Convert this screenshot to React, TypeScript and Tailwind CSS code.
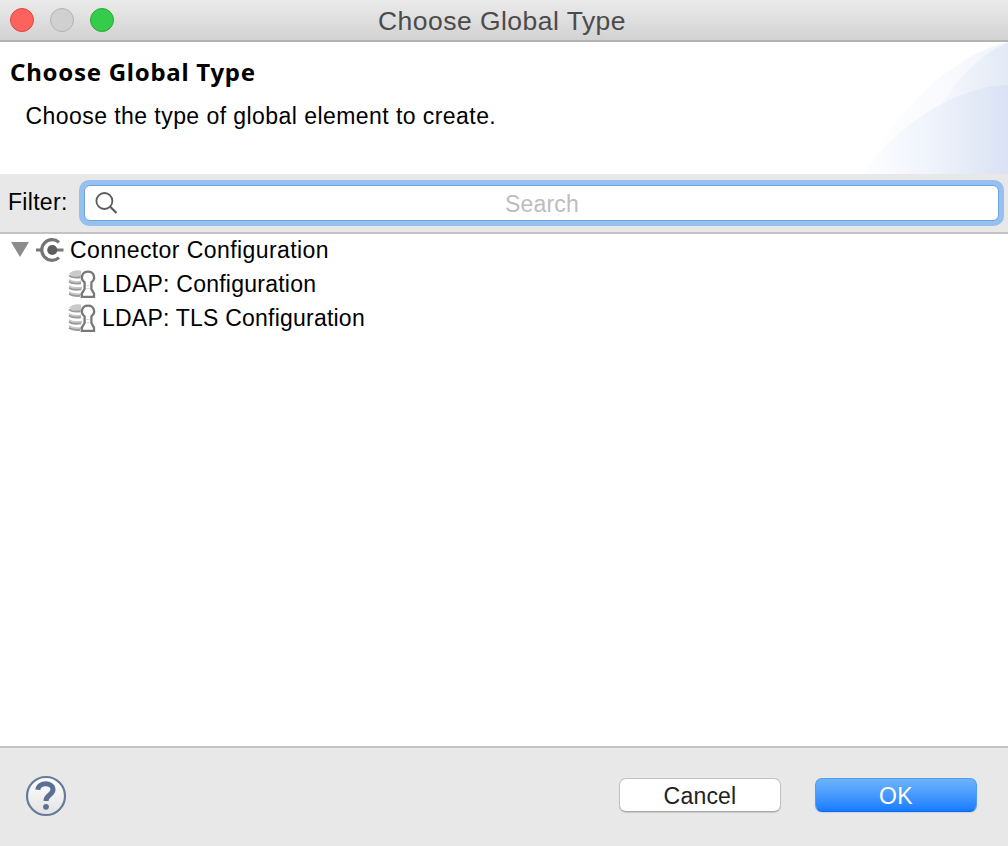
function ConnectorIcon() {
  return (
    <svg className="ml-[6px] h-8 w-[30px] shrink-0" viewBox="0 0 30 32" fill="none">
      <path d="M1 16H6.5M17 16H28.5" stroke="#777" strokeWidth="3" />
      <path d="M24 8.4A10.3 10.3 0 1 0 24 23.6" stroke="#757575" strokeWidth="3.2" />
      <circle cx="17.3" cy="16" r="5.1" fill="#5e5e5e" />
    </svg>
  );
}

function ConfigIcon() {
  return (
    <svg className="h-8 w-8 shrink-0" viewBox="0 0 32 32" fill="none">
      <path
        d="M3 6.5Q8 2 15 3.5V10Q7 11 3 6.5ZM3 12Q8 15 15 13.5V16.5Q7 17.5 3 14.5ZM3 18.2Q8 21 16 19.7V22.4Q7 23.6 3 21ZM3 24.2Q8 27 15 26V28.6Q7 29.8 3 27.2Z"
        fill="#cacaca"
      />
      <path d="M3 8.5Q7 11.5 14.5 10.2M3 14.7Q7 17.5 15 16.3M3 21Q7 23.7 15 22.4M3 27Q7 29.5 14 28.8" stroke="#999" strokeWidth="1.9" />
      <path
        d="M18.6 15.4C13.8 11.8 15.8 4.6 22 4.6S30.2 11.8 25.4 15.4V22L28 26.6V29.8H15.8V26.6L18.6 22Z"
        fill="#fff"
        stroke="#787878"
        strokeWidth="2.3"
      />
      <path d="M20 18.5H24M20 21.5H24" stroke="#e1e1e1" strokeWidth="1" />
    </svg>
  );
}

function TreeItem({ label, spacing }: { label: string; spacing: string }) {
  return (
    <div className="flex h-[34px] items-center pl-[66px]">
      <ConfigIcon />
      <span className={`ml-[4px] pt-[2px] ${spacing}`}>{label}</span>
    </div>
  );
}

function HeaderArt() {
  return (
    <svg className="h-[132px] w-[148px]" viewBox="0 0 148 132">
      <defs>
        <linearGradient id="outer" gradientUnits="userSpaceOnUse" x1="0" x2="148">
          <stop offset="0" stopColor="#fff" />
          <stop offset=".5" stopColor="#fafbfe" />
          <stop offset="1" stopColor="#f0f4fb" />
        </linearGradient>
        <linearGradient id="inner" gradientUnits="userSpaceOnUse" x1="60" x2="148">
          <stop offset="0" stopColor="#f9fafe" />
          <stop offset=".4" stopColor="#f1f5fb" />
          <stop offset="1" stopColor="#e3eaf6" />
        </linearGradient>
        <linearGradient id="lower" gradientUnits="userSpaceOnUse" x1="0" x2="148">
          <stop offset="0" stopColor="#fefefe" />
          <stop offset=".45" stopColor="#f0f4fc" />
          <stop offset=".87" stopColor="#dfe7f5" />
          <stop offset=".9" stopColor="#dde4f6" />
          <stop offset="1" stopColor="#dce2f6" />
        </linearGradient>
      </defs>
      <path d="M3 132C32 75 86 15 148 0V132Z" fill="url(#outer)" />
      <path d="M52 132C60 85 104 16 148 1V132Z" fill="url(#inner)" />
      <path d="M3 132C36 83 96 44 148 43V132Z" fill="url(#lower)" />
    </svg>
  );
}

export default function App() {
  return (
    <main className="flex h-[846px] w-[1008px] flex-col overflow-hidden bg-[#e8e8e8] font-['Liberation_Sans',Arial,sans-serif] text-[23px] leading-8 tracking-[0.44px] text-black">
      <header className="grid h-[42px] shrink-0 grid-cols-[1fr_auto_1fr] items-center border-b-2 border-[#b3b3b3] bg-linear-to-b from-[#ebebeb] to-[#d2d2d2]">
        <div className="flex gap-4 pl-[10px]">
          <span className="size-6 rounded-full border border-[#e2443f] bg-[#fd625d]" />
          <span className="size-6 rounded-full border border-[#b2b2b2] bg-[#d0d0d0]" />
          <span className="size-6 rounded-full border border-[#24ac36] bg-[#35cb4b]" />
        </div>
        <h1 className="pt-px pr-[4px] text-[26.5px] tracking-[0.47px] text-[#4b4b4b]">Choose Global Type</h1>
      </header>

      <section className="flex h-[132px] shrink-0 justify-between bg-white">
        <div className="pt-[14px] pl-[10px]">
          <h2 className="font-['Noto_Sans','Open_Sans',sans-serif] text-[24px] font-bold tracking-[0.73px]">Choose Global Type</h2>
          <p className="mt-[12px] pl-[15.5px]">Choose the type of global element to create.</p>
        </div>
        <HeaderArt />
      </section>

      <section className="flex h-[60px] shrink-0 border-b-2 border-[#c3c3c3] pl-[8px]">
        <label htmlFor="filter" className="w-[71px] pt-[12px] tracking-[0.3px]">Filter:</label>
        <div className="mt-[6px] h-[46px] w-[925px] rounded-[10px] bg-[#95c0f0] p-[5px]">
          <div className="flex h-full items-center rounded-[6px] border border-[#6fa3dc] bg-white">
            <svg className="ml-[10px] h-6 w-6 shrink-0" viewBox="0 0 24 24" fill="none" stroke="#5c5c5c" strokeWidth="1.8">
              <circle cx="9.4" cy="10" r="8" />
              <path d="M15.2 15.8L21.5 22" strokeWidth="2.2" />
            </svg>
            <input id="filter" placeholder="Search" className="mr-[33px] min-w-0 flex-1 bg-transparent pt-px text-center tracking-[0.2px] outline-none placeholder:text-[#bdbdbd]" />
          </div>
        </div>
      </section>

      <section className="min-h-0 flex-1 bg-white">
        <div className="flex h-[32px] items-center pl-[11px]">
          <svg className="h-4 w-[18px] shrink-0" viewBox="0 0 18 16"><path d="M0 0H18L9 15Z" fill="#8c8c8c" /></svg>
          <ConnectorIcon />
          <span className="ml-[5px] tracking-[0.42px]">Connector Configuration</span>
        </div>
        <TreeItem label="LDAP: Configuration" spacing="tracking-[0.24px]" />
        <TreeItem label="LDAP: TLS Configuration" spacing="tracking-[0.22px]" />
      </section>

      <footer className="flex h-[100px] shrink-0 items-center border-t-2 border-[#c3c3c3] pr-[31px] pb-[4px] pl-[25px]">
        <button aria-label="Help" className="pt-px">
          <svg className="size-[42px]" viewBox="0 0 42 42" fill="none">
            <defs>
              <linearGradient id="help" x2="0" y2="1"><stop stopColor="#fff" /><stop offset="1" stopColor="#e2e2e2" /></linearGradient>
            </defs>
            <circle cx="21" cy="21" r="19" fill="url(#help)" stroke="#667a9b" strokeWidth="2.2" />
            <path d="M12.8 14.8C13.6 6.8 28 6.8 28 14.5C28 20 21 19.5 21 26" stroke="#5a7094" strokeWidth="5" />
            <circle cx="21" cy="31.8" r="2.9" fill="#5a7094" />
          </svg>
        </button>
        <div className="ml-auto flex gap-[34px]">
          <button className="h-[34px] w-[162px] rounded-[7px] border border-[#c2c2c2] border-b-[#aaa] bg-white pt-px tracking-[0.2px] text-[#222] shadow-[0_1px_1px_#c8c8c8]">Cancel</button>
          <button className="h-[34px] w-[162px] rounded-[7px] border border-[#4c9ff5] border-b-[#0c67f3] bg-linear-to-b from-[#6db3fa] to-[#147cff] pt-px text-white shadow-[0_1px_1px_#cbd3df]">OK</button>
        </div>
      </footer>
    </main>
  );
}
